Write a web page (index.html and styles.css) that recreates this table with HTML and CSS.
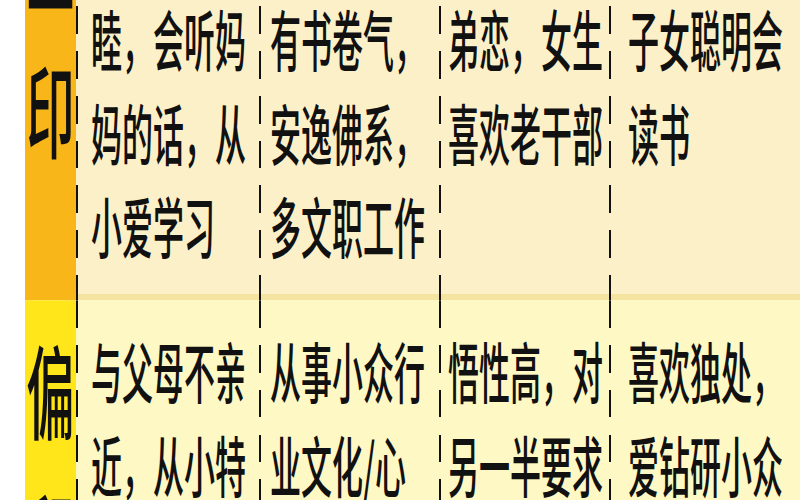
FILE: index.html
```html
<!DOCTYPE html>
<html lang="zh-CN">
<head>
<meta charset="utf-8">
<title>印星</title>
<link rel="stylesheet" href="styles.css">
</head>
<body>
<div class="sheet">
  <div class="grid">
    <div class="head head-zheng">正印</div>
    <div class="cell r1 c1">父母关系和睦，会听妈妈的话，从小爱学习</div>
    <div class="cell r1 c2">为人斯文，有书卷气，安逸佛系，多文职工作</div>
    <div class="cell r1 c3">男生喜欢姐弟恋，女生喜欢老干部</div>
    <div class="cell r1 c4">晚年有福，子女聪明会读书</div>

    <div class="head head-pian">偏印</div>
    <div class="cell r2 c1">与父母不亲近，从小特立独行</div>
    <div class="cell r2 c2">从事小众行业文化/心理学</div>
    <div class="cell r2 c3">悟性高，对另一半要求高</div>
    <div class="cell r2 c4">喜欢独处，爱钻研小众领域</div>
  </div>
</div>
</body>
</html>
```
FILE: styles.css
```css
html, body {
  margin: 0;
  padding: 0;
  background: #ffffff;
  overflow: hidden;
}
body {
  width: 800px;
  height: 500px;
}
.sheet {
  display: flow-root;
  padding-left: 25px;
  transform: scaleY(2.13);
  transform-origin: 0 0;
}
.grid {
  margin-top: -59.6px;
  display: grid;
  grid-template-columns: 51px 183px 180px 170px 220px;
  font-family: "Noto Sans CJK SC", "Noto Sans", sans-serif;
  font-weight: 500;
  color: #111111;
}
.head {
  font-size: 48px;
  line-height: 69px;
  text-align: center;
  padding-top: 7px;
}
.head-zheng {
  background: #f8b619;
}
.head-pian {
  background: #ffe61a;
}
.cell {
  font-size: 31px;
  line-height: 44px;
  padding-top: 11.2px;
  background-repeat: no-repeat;
}
.r1 {
  padding-bottom: 13.2px;
  background-color: #fcf0c8;
  background-image:
    repeating-linear-gradient(to bottom, #111 0 13px, transparent 13px 21px),
    linear-gradient(to top, #f5e3a0 0 3.2px, transparent 3.2px);
  background-size: 2px 100%, 100% 100%;
}
.r2 {
  padding-bottom: 13.2px;
  background-color: #fef8c4;
  background-image:
    repeating-linear-gradient(to bottom, #111 0 13px, transparent 13px 21px);
  background-size: 2px 100%;
}
.c1 { padding-left: 15px; padding-right: 0; }
.c2 { padding-left: 11px; padding-right: 6px; }
.c3 { padding-left: 9px; padding-right: 0; }
.c4 { padding-left: 19px; padding-right: 31px; }
```
